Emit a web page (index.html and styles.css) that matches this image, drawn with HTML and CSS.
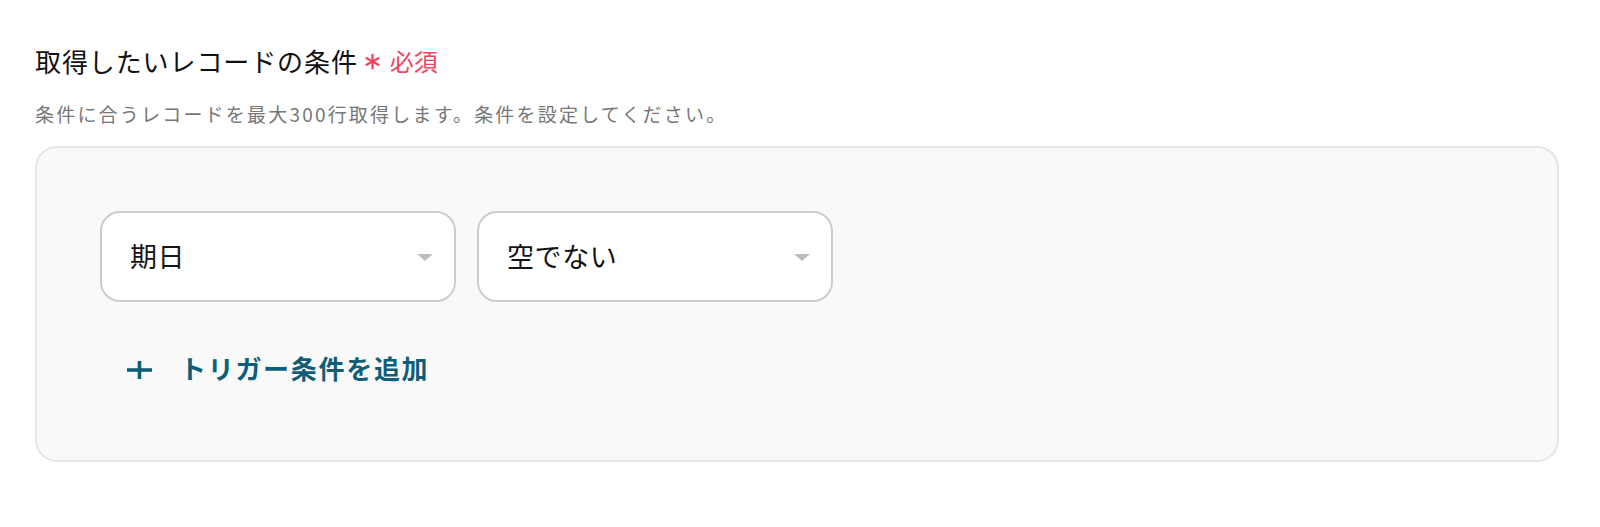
FILE: index.html
```html
<!DOCTYPE html>
<html lang="ja">
<head>
<meta charset="utf-8">
<link rel="stylesheet" href="styles.css">
</head>
<body>
<div class="field">
  <div class="label-row">
    <span class="label">取得したいレコードの条件</span>
    <svg class="req-star" width="17" height="17" viewBox="0 0 16 16" aria-hidden="true">
      <g stroke="#f2445c" stroke-width="2.2" stroke-linecap="butt">
        <line x1="8" y1="0.8" x2="8" y2="15.2"/>
        <line x1="1.7" y1="4.4" x2="14.3" y2="11.6"/>
        <line x1="1.7" y1="11.6" x2="14.3" y2="4.4"/>
      </g>
    </svg>
    <span class="req">必須</span>
  </div>
  <p class="help">条件に合うレコードを最大300行取得します。条件を設定してください。</p>
  <div class="panel">
    <div class="cond-row">
      <div class="select">
        <span class="select-text">期日</span>
        <span class="caret"></span>
      </div>
      <div class="select">
        <span class="select-text">空でない</span>
        <span class="caret"></span>
      </div>
    </div>
    <button class="add-btn" type="button">
      <svg class="plus" width="27" height="20" viewBox="0 0 27 20" aria-hidden="true">
        <g stroke="#0f5e78" stroke-width="3.6">
          <line x1="1" y1="10" x2="26" y2="10"/>
          <line x1="13.5" y1="1" x2="13.5" y2="19"/>
        </g>
      </svg>
      <span class="add-text">トリガー条件を追加</span>
    </button>
  </div>
</div>
</body>
</html>
```
FILE: styles.css
```css
* { box-sizing: border-box; }
html, body {
  margin: 0;
  background: #ffffff;
}
body {
  font-family: "Noto Sans CJK JP", "Noto Sans", sans-serif;
  padding: 44px 41px 0 35px;
  color: #222;
}
.label-row {
  display: flex;
  align-items: center;
  height: 34px;
}
.label {
  font-size: 26px;
  line-height: 34px;
  letter-spacing: 0.9px;
  color: #111111;
}
.req-star {
  margin-left: 6px;
  margin-right: 9px;
}
.req {
  font-size: 24px;
  line-height: 34px;
  color: #f2445c;
}
.help {
  margin: 24px 0 20px;
  font-size: 19px;
  line-height: 24px;
  letter-spacing: 2.2px;
  color: #777777;
}
.panel {
  background: #f9f9f9;
  border: 2px solid #e5e5e5;
  border-radius: 22px;
  height: 316px;
  padding: 63px 63px 0;
}
.cond-row {
  display: flex;
  gap: 21px;
}
.select {
  width: 356px;
  height: 91px;
  background: #fff;
  border: 2px solid #cccccc;
  border-radius: 20px;
  display: flex;
  align-items: center;
  justify-content: space-between;
  padding: 0 21px 0 28px;
}
.select-text {
  font-size: 27px;
  letter-spacing: 0.6px;
  color: #141414;
  margin-top: -3px;
}
.caret {
  width: 0;
  height: 0;
  border-left: 8.5px solid transparent;
  border-right: 8.5px solid transparent;
  border-top: 7px solid #bdbdbd;
  margin-top: 1px;
}
.add-btn {
  margin: 41px 0 0 26px;
  height: 48px;
  display: flex;
  align-items: center;
  gap: 27px;
  background: none;
  border: 0;
  padding: 0;
  font-family: inherit;
  cursor: pointer;
}
.plus {
  margin-top: 6px;
}
.add-text {
  font-size: 26px;
  font-weight: 700;
  letter-spacing: 1.7px;
  color: #0f5e78;
}
```
